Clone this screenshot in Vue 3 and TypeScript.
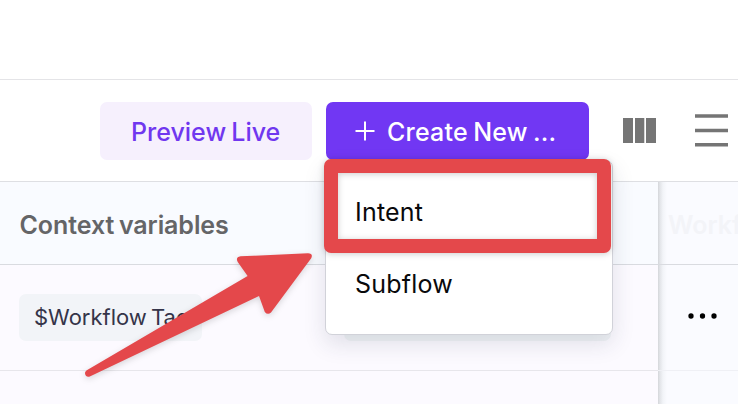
<script setup lang="ts">
import { ref } from 'vue'

const createOptions = ref<string[]>(['Intent', 'Subflow'])
const variables = ref<string[]>(['$Workflow Tag'])
</script>

<template>
  <main class="screen">
    <div class="topbar"></div>
    <header class="toolbar">
      <button class="btn preview"><span>Preview Live</span></button>
      <div class="create-wrap">
        <button class="btn create">
          <svg class="plus" width="20" height="20" viewBox="0 0 20 20">
            <path d="M10 .5v19M.5 10h19" />
          </svg>
          <span>Create New ...</span>
        </button>
        <div class="menu">
          <div v-for="option in createOptions" :key="option" class="option">
            <span :class="option.toLowerCase()">{{ option }}</span>
          </div>
        </div>
      </div>
      <svg class="columns" width="33" height="25" viewBox="0 0 33 25">
        <path d="M0 0h10v25H0zM12 0h9.3v25H12zM23 0h10v25H23z" />
      </svg>
      <svg class="lines" width="33" height="33" viewBox="0 0 33 33">
        <path d="M0 .2h33v3.6H0zM0 14.8h33v3.5H0zM0 29h33v3.6H0z" />
      </svg>
    </header>
    <section class="table">
      <div class="main-col">
        <div class="head"><span class="title">Context variables</span></div>
        <div class="row">
          <div v-for="name in variables" :key="name" class="chip"><span>{{ name }}</span></div>
          <div class="chip second"></div>
        </div>
        <div class="rest"></div>
      </div>
      <div class="side-col">
        <div class="head"><span class="ghost">Workflow</span></div>
        <div class="row">
          <svg width="30" height="8" viewBox="0 0 30 8">
            <circle cx="3" cy="4" r="2.65" />
            <circle cx="14.5" cy="4" r="2.65" />
            <circle cx="26" cy="4" r="2.65" />
          </svg>
        </div>
        <div class="rest"></div>
      </div>
    </section>
    <svg class="arrow" width="738" height="404" viewBox="0 0 738 404">
      <path d="M86.8 370.2L247.6 275.9L237.9 262.3Q235 257.2 240.5 256.3L307.8 253.3Q313.5 253.2 311.2 258.3L271 312.4Q267.8 315.5 264.8 312L259 296L89.8 376.4C85.8 378 83 372.6 86.8 370.2Z" />
    </svg>
    <div class="highlight"></div>
  </main>
</template>

<style>
body { margin: 0; overflow: hidden; background: #fff; }
</style>

<style scoped>
* { box-sizing: border-box; }
.screen {
  position: relative;
  width: 738px;
  height: 404px;
  overflow: hidden;
  background: #fff;
  font-family: Inter, "Liberation Sans", sans-serif;
  color: #09090b;
}
span { white-space: nowrap; }
.topbar { height: 80px; border-bottom: 1px solid #e4e4e7; }
.toolbar {
  height: 102px;
  display: flex;
  align-items: flex-start;
  padding: 22px 10px 0 100px;
  border-bottom: 1px solid #dedfe3;
}
.btn {
  height: 58px;
  padding: 1px 0 0;
  border: 0;
  border-radius: 7px;
  display: flex;
  align-items: center;
  font: 450 25px/58px Inter, sans-serif;
}
.preview {
  width: 212px;
  margin-right: 14px;
  padding-left: 31px;
  background: #f6f0fd;
  color: #7037ef;
}
.preview span { letter-spacing: 0; word-spacing: -1.5px; }
.create-wrap { position: relative; width: 263px; margin-right: 34px; }
.create { width: 263px; padding-left: 29px; background: #7137f3; color: #fff; }
.create span { margin-left: 12px; letter-spacing: .2px; word-spacing: -1.5px; }
.plus { fill: none; stroke: #fff; stroke-width: 2; flex: none; margin-top: -2px; }
.menu {
  position: absolute;
  z-index: 3;
  left: -1px;
  top: 58px;
  width: 288px;
  height: 175px;
  padding-top: 15px;
  border: 1px solid #d1d2d9;
  border-radius: 7px;
  background: #fff;
  box-shadow: 0 9px 22px rgba(42, 50, 75, .13);
}
.option {
  height: 72px;
  padding-left: 29px;
  font-size: 25px;
  line-height: 72px;
  letter-spacing: .2px;
}
.columns { margin-top: 16px; margin-right: 39px; fill: #757575; }
.lines { margin-top: 12px; fill: #757575; }
.table { display: grid; grid-template-columns: 658px 80px; height: 222px; }
.main-col { background: #fcfaff; }
.side-col {
  position: relative;
  background: linear-gradient(90deg, #d4d6da 0, #e3e5e9 2px, #f2f4f8 5px, #fafbff 9px);
}
.head {
  height: 83px;
  border-bottom: 1px solid #d9dbe0;
  line-height: 86px;
  font-size: 25px;
  font-weight: 600;
}
.main-col .head { padding-left: 19.5px; background: #f9fbff; color: #656567; }
.side-col .head { padding-left: 10px; color: #f3f4f8; overflow: hidden; }
.title { letter-spacing: -.08px; word-spacing: -1.5px; }
.row { height: 106px; display: flex; border-bottom: 1px solid #e7e6eb; }
.main-col .row { padding: 29px 0 0 19px; gap: 142px; }
.side-col .row { padding: 47px 0 0 30px; border-color: #eff0f5; }
.chip {
  width: 183px;
  height: 47px;
  padding-left: 15px;
  border-radius: 7px;
  background: #f2f4f8;
  color: #353449;
  font-size: 22px;
  line-height: 47px;
}
.chip span { word-spacing: -2px; }
.second { width: 267px; background: #f0f3f6; }
.arrow {
  position: absolute;
  inset: 0;
  z-index: 5;
  fill: #e4484b;
  filter: drop-shadow(0 2px 3px rgba(0, 0, 0, .15));
}
.highlight {
  position: absolute;
  z-index: 5;
  left: 324px;
  top: 159px;
  width: 287px;
  height: 94px;
  border: 14px solid #e4484b;
  border-radius: 7px;
  filter: drop-shadow(0 1px 3px rgba(0, 0, 0, .2));
}
</style>
